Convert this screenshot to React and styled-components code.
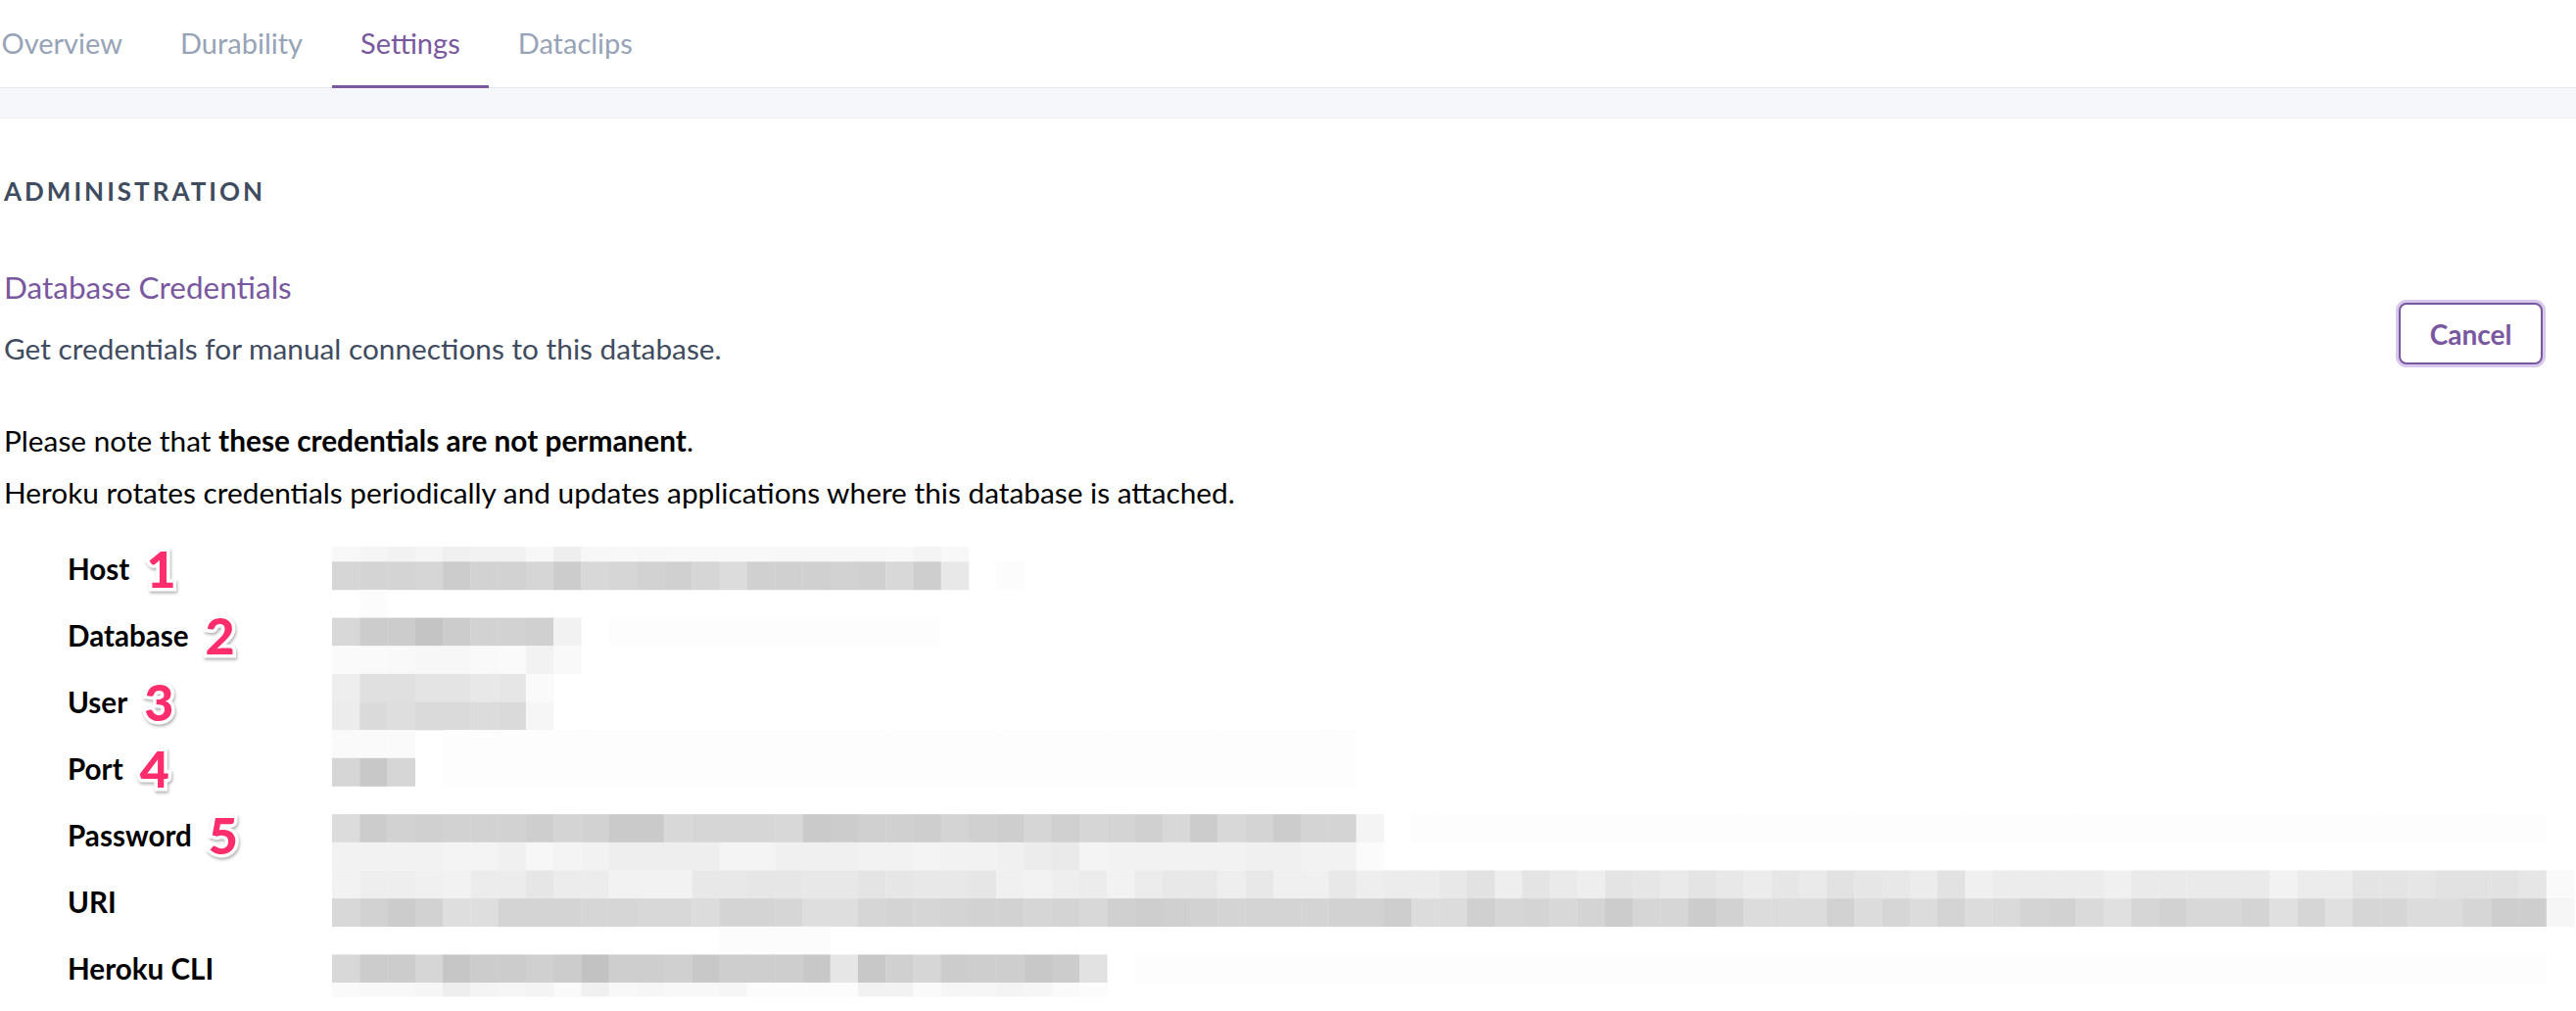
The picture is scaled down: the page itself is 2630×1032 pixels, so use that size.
import React from "react";
import styled, { createGlobalStyle } from "styled-components";

const GlobalStyle = createGlobalStyle`
  body {
    margin: 0;
    background: #fff;
    font-family: Lato, "Open Sans", sans-serif;
    overflow-x: hidden;
  }
`;

const PURPLE = "#79589f";

const Page = styled.div`
  width: 2630px;
  min-height: 1032px;
`;

const TabNav = styled.nav`
  display: flex;
  height: 90px;
  margin-left: -28px;
  border-bottom: 1px solid #e4e7f0;
  box-sizing: border-box;
`;

const Tab = styled.a`
  display: flex;
  align-items: center;
  padding: 0 29.5px;
  margin-bottom: -1px;
  font-size: 29px;
  color: ${(p) => (p.$active ? PURPLE : "#97a3b7")};
  border-bottom: 3px solid ${(p) => (p.$active ? PURPLE : "transparent")};
  cursor: pointer;
`;

const SubBand = styled.div`
  height: 30px;
  background: #f6f7fb;
  border-bottom: 1px solid #eef0f5;
`;

const Content = styled.section`
  padding: 0 34px 0 4px;
`;

const SectionTitle = styled.h2`
  margin: 59px 0 0;
  font-size: 26px;
  line-height: 30px;
  font-weight: 700;
  letter-spacing: 3px;
  color: #3f4b5e;
`;

const HeaderRow = styled.div`
  display: flex;
  justify-content: space-between;
  align-items: flex-start;
  margin-top: 63px;
`;

const Heading = styled.h3`
  margin: 0;
  font-size: 31.5px;
  line-height: 40px;
  font-weight: 400;
  color: ${PURPLE};
`;

const Description = styled.p`
  margin: 25px 0 0;
  font-size: 29.8px;
  line-height: 36px;
  color: #3f4b5e;
`;

const CancelButton = styled.button`
  margin-top: 36px;
  width: 147px;
  height: 63px;
  border: 2px solid ${PURPLE};
  border-radius: 8px;
  box-shadow: 0 0 0 3px #d8c8ee;
  background: #fff;
  color: ${PURPLE};
  font-family: Lato, sans-serif;
  font-size: 28px;
  font-weight: 700;
  cursor: pointer;
`;

const Note = styled.p`
  margin: ${(p) => p.$top}px 0 0;
  font-size: 29.8px;
  line-height: 36px;
  color: #000;

  strong {
    font-weight: 700;
  }
`;

const CredGrid = styled.div`
  display: grid;
  grid-template-columns: 335px 1fr;
  margin-top: 25px;
`;

const Labels = styled.dl`
  margin: 0;
  padding-left: 65px;
  display: flex;
  flex-direction: column;
`;

const LabelRow = styled.dt`
  display: flex;
  align-items: center;
  height: 68px;
  font-size: 29.6px;
  font-weight: 700;
  color: #000;
`;

const Marker = styled.span`
  margin-left: 17px;
  font-family: Lato, "Liberation Sans", sans-serif;
  font-size: 52px;
  font-weight: 900;
  line-height: 1;
  color: #ff2d6c;
  -webkit-text-stroke: 7px #fff;
  paint-order: stroke fill;
  filter: drop-shadow(1px 2px 1.5px rgba(0, 0, 0, 0.3));
`;

const Redacted = styled.svg`
  display: block;
  margin-top: 12px;
`;

// pixelated redaction of the secret values: [startCol, "gray levels..."]
const MOSAIC = [
  [[0, "f8 f5 f2 f5 f0 f2 f2 f7 ee f7 f8 f7 f8 f8 f8 f8 f7 f7 f7 f7 f8 f4 f8"]],
  [[0, "d6 d4 d4 d6 cc d2 d2 d6 cc d8 d6 d2 d0 d6 dc d0 d0 d0 d2 d0 d8 ce e8"], [24, "fc"]],
  [[1, "fc"]],
  [[0, "d8 cc cc c4 cc d2 d2 d0 f2"], [10, "fd fd fd fd fd fd fd fd fd fd fd fd"]],
  [[0, "fa fa f9 f7 f7 f9 fa f2 f9"]],
  [[0, "ee e0 e0 e4 e4 e8 e6 fa"]],
  [[0, "ec da de da da dc da f6"]],
  [[0, "fa fa fa"], [4, "fd fd fd fd fd fd fd fd fd fd fd fd fd fd fd fd fd fd fd fd fd fd fd fd fd fd fd fd fd fd fd fd fd"]],
  [[0, "d6 c8 d6"], [4, "fd fd fd fd fd fd fd fd fd fd fd fd fd fd fd fd fd fd fd fd fd fd fd fd fd fd fd fd fd fd fd fd fd"]],
  [],
  [
    [0, "dc cc d2 d0 d2 d2 d2 ce d4 d2 ca ca d8 d6 d6 d6 d8 ca cc d0 d0 ce d4 d0 ce d6 d0 d6 d4 d0 d8 cc d8 d4 cc d4 d4 f4"],
    [39, "fd fd fd fd fd fd fd fd fd fd fd fd fd fd fd fd fd fd fd fd fd fd fd fd fd fd fd fd fd fd fd fd fd fd fd fd fd fd fd fd fd"],
  ],
  [[0, "f2 f2 f2 f2 f4 f4 f0 f7 f4 f2 ee ee ee ee f4 f4 f0 f0 f0 f2 f2 f4 f2 f2 f0 ec ea f4 f2 f2 f2 f2 f2 f0 f0 f2 f2 fb"]],
  [
    [0, "f2 ee ee f0 f2 ec ec e6 ec ec f2 f2 f2 e8 e8 e6 e6 e8 e8 e4 e6 e8 e8 e6 f0 f2 ee"],
    [27, "ec f2 ec e8 e8 ee e8 f0 f0 e8 ee ec ec e8 e2 ee e4 ea ee e4 e6 ea e4 e8 ec e6"],
    [53, "ea e2 e6 e8 ec e2 f0 ec ec ec ec f0 ea ea ea ea ea f2 ec ec e4 e4 e6 e2 e2 e2 e6 fa"],
  ],
  [
    [0, "d8 d2 cc d2 de de d4 d4 d4 d6 d6 d8 d8 dc d4 d4 d6 de de d6 d4 d6 d4 d2 d2 d6"],
    [26, "d4 d8 d0 ce d0 d2 d4 d4 d4 d4 d2 d2 ce dc dc d0 d6 d4 d8 d4 cc d6 d6 cc d2 dc dc"],
    [53, "dc d2 dc d6 dc d4 dc da d4 d2 da e0 d6 d2 d8 d8 d4 e0 d6 e0 d6 d6 dc dc d6 ce ce f6"],
  ],
  [[14, "fc fc fc fc"]],
  [
    [0, "d8 cc cc d6 c6 cc cc d0 cc c2 ce ce d0 c8 ce ce ce c8 e6 c8 d0 d6 cc ce ce c8 cc e2"],
    [29, "fd fd fd fd fd fd fd fd fd fd fd fd fd fd fd fd fd fd fd fd fd fd fd fd fd fd fd fd fd fd fd fd fd fd fd fd fd fd fd fd fd fd fd fd fd fd fd fd fd fd fd"],
  ],
  [[0, "fa f8 f8 f6 ee f4 f6 f4 fa f0 f8 f6 f8 f8 f6 fc fc fc fc f2 f2 fa f6 f6 f4 f6 fa fc"]],
];

const CELL_W = 28.26;
const CELL_H = 28.65;
const FIRST_H = 15.3;

const rowTop = (r) => (r === 0 ? 0 : FIRST_H + (r - 1) * CELL_H);
const rowHeight = (r) => (r === 0 ? FIRST_H : r === MOSAIC.length - 1 ? 14 : CELL_H);

const RedactedValues = () => {
  const cells = [];
  MOSAIC.forEach((runs, r) => {
    runs.forEach(([start, tones]) => {
      tones.split(" ").forEach((g, i) => {
        cells.push(
          <rect
            key={`${r}-${start + i}`}
            x={(start + i) * CELL_W}
            y={rowTop(r)}
            width={CELL_W + 0.3}
            height={rowHeight(r) + 0.3}
            fill={`#${g}${g}${g}`}
          />
        );
      });
    });
  });
  return (
    <Redacted width="2291" height="460" viewBox="0 0 2291 460">
      {cells}
    </Redacted>
  );
};

const fields = [
  { label: "Host", mark: "1" },
  { label: "Database", mark: "2" },
  { label: "User", mark: "3" },
  { label: "Port", mark: "4" },
  { label: "Password", mark: "5" },
  { label: "URI" },
  { label: "Heroku CLI" },
];

const tabs = ["Overview", "Durability", "Settings", "Dataclips"];

const App = () => {
  return (
    <Page>
      <GlobalStyle />
      <TabNav>
        {tabs.map((t) => (
          <Tab key={t} $active={t === "Settings"}>
            {t}
          </Tab>
        ))}
      </TabNav>
      <SubBand />
      <Content>
        <SectionTitle>ADMINISTRATION</SectionTitle>
        <HeaderRow>
          <div>
            <Heading>Database Credentials</Heading>
            <Description>Get credentials for manual connections to this database.</Description>
          </div>
          <CancelButton>Cancel</CancelButton>
        </HeaderRow>
        <Note $top={58}>
          Please note that <strong>these credentials are not permanent</strong>.
        </Note>
        <Note $top={17}>
          Heroku rotates credentials periodically and updates applications where this database is attached.
        </Note>
        <CredGrid>
          <Labels>
            {fields.map((f) => (
              <LabelRow key={f.label}>
                {f.label}
                {f.mark && <Marker>{f.mark}</Marker>}
              </LabelRow>
            ))}
          </Labels>
          <RedactedValues />
        </CredGrid>
      </Content>
    </Page>
  );
};

export default App;
